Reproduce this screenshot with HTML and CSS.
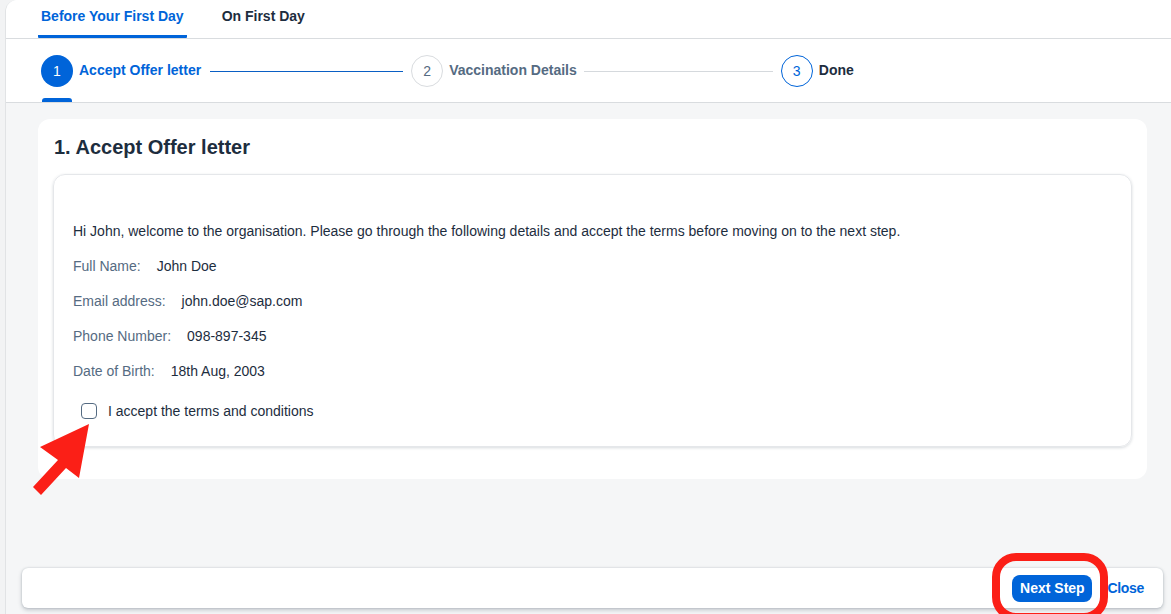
FILE: index.html
```html
<!DOCTYPE html>
<html lang="en">
<head>
<meta charset="utf-8">
<title>Onboarding</title>
<link rel="stylesheet" href="styles.css">
</head>
<body>
<div class="app">
  <header class="tabs">
    <div class="tab tab-active">Before Your First Day</div>
    <div class="tab">On First Day</div>
  </header>
  <nav class="stepper">
    <div class="step step-current">
      <span class="circle circle-filled">1</span>
      <span class="step-label label-active">Accept Offer letter</span>
      <span class="indicator"></span>
    </div>
    <span class="connector connector-done"></span>
    <div class="step">
      <span class="circle circle-gray">2</span>
      <span class="step-label label-gray">Vaccination Details</span>
    </div>
    <span class="connector"></span>
    <div class="step">
      <span class="circle circle-outline">3</span>
      <span class="step-label label-dark">Done</span>
    </div>
  </nav>
  <main class="content">
    <section class="card">
      <h1 class="card-title">1. Accept Offer letter</h1>
      <div class="panel">
        <p class="intro">Hi John, welcome to the organisation. Please go through the following details and accept the terms before moving on to the next step.</p>
        <div class="field"><span class="field-label">Full Name:</span><span class="field-value">John Doe</span></div>
        <div class="field"><span class="field-label">Email address:</span><span class="field-value">john.doe@sap.com</span></div>
        <div class="field"><span class="field-label">Phone Number:</span><span class="field-value">098-897-345</span></div>
        <div class="field"><span class="field-label">Date of Birth:</span><span class="field-value">18th Aug, 2003</span></div>
        <label class="check"><span class="box"></span><span>I accept the terms and conditions</span></label>
      </div>
    </section>
    <footer class="footer">
      <button class="btn-primary">Next Step</button>
      <button class="btn-link">Close</button>
    </footer>
  </main>
</div>
<svg class="arrow" width="1171" height="614" viewBox="0 0 1171 614">
  <polygon points="89,424 79,478 66,468 41,495 33,487 58,460 40,447" fill="#fb1f17"/>
</svg>
<div class="highlight"></div>
</body>
</html>
```
FILE: styles.css
```css
* { box-sizing: border-box; }
html, body { margin: 0; height: 100%; }
body {
  background: #f2f3f4;
  font-family: "Liberation Sans", Arial, sans-serif;
  color: #1d2d3e;
  overflow: hidden;
}
.app {
  margin-left: 5px;
  height: 614px;
  display: flex;
  flex-direction: column;
  background: #f5f6f7;
  border-left: 1px solid #e1e3e5;
  border-top-left-radius: 12px;
  overflow: hidden;
}
.tabs {
  height: 39px;
  background: #fff;
  border-bottom: 1px solid #d9dcdf;
  display: flex;
  gap: 32px;
  padding-left: 32px;
}
.tab {
  height: 38px;
  padding: 0 3px 6px;
  display: flex;
  align-items: center;
  font-size: 14px;
  font-weight: bold;
  color: #1d2d3e;
}
.tab-active {
  color: #0064d9;
  border-bottom: 3px solid #0064d9;
  border-radius: 0 0 1px 1px;
  padding-bottom: 3px;
}
.stepper {
  height: 64px;
  background: #fff;
  border-bottom: 1px solid #d9dcdf;
  display: flex;
  align-items: center;
  padding: 0 0 1px 35px;
}
.step {
  position: relative;
  display: flex;
  align-items: center;
  height: 100%;
}
.circle {
  width: 32px;
  height: 32px;
  border-radius: 50%;
  display: flex;
  align-items: center;
  justify-content: center;
  font-size: 14px;
  margin-top: 2px;
}
.circle-filled { background: #0064d9; color: #fff; }
.circle-gray { border: 1px solid #d9dcdf; color: #556b82; }
.circle-outline { border: 1px solid #0064d9; color: #0064d9; }
.step-label {
  margin-left: 6px;
  font-size: 14px;
  font-weight: bold;
  margin-bottom: 1px;
}
.label-active { color: #0064d9; }
.label-gray { color: #556b82; }
.label-dark { color: #1d2d3e; }
.indicator {
  position: absolute;
  left: 1px;
  bottom: -1px;
  width: 30px;
  height: 4px;
  background: #0064d9;
  border-radius: 3px 3px 0 0;
}
.connector {
  height: 1px;
  background: #d5d9dd;
  width: 189px;
  margin: 2px 8px 0 7px;
}
.connector-done { background: #0a5fc4; width: 193px; margin-left: 9px; }
.content {
  flex: 1;
  display: flex;
  flex-direction: column;
  padding: 16px 0 6px 0;
}
.card {
  margin: 0 24px 0 32px;
  background: #fff;
  border-radius: 12px;
  padding: 15px 15px 32px 15px;
}
.card-title {
  margin: 0 0 14px 1px;
  font-size: 20px;
  font-weight: bold;
  color: #1d2d3e;
  line-height: 26px;
}
.panel {
  border: 1px solid #e5e7ea;
  border-radius: 12px;
  box-shadow: 0 1px 3px rgba(34, 53, 72, 0.18);
  padding: 47px 19px 27px 19px;
}
.intro {
  margin: 0 0 17px;
  font-size: 14px;
  line-height: 18px;
  color: #1d2d3e;
}
.field {
  font-size: 14px;
  line-height: 18px;
  margin-bottom: 17px;
  display: flex;
  gap: 16px;
}
.field-label { color: #556b82; }
.field-value { color: #1d2d3e; }
.check {
  display: flex;
  align-items: center;
  gap: 11px;
  font-size: 14px;
  color: #1d2d3e;
  margin-top: 23px;
  padding-left: 8px;
}
.box {
  width: 16px;
  height: 16px;
  border: 1px solid #556b82;
  border-radius: 4px;
  background: #fff;
}
.footer {
  margin: auto 8px 0 16px;
  height: 40px;
  background: #fff;
  border-radius: 6px;
  box-shadow: 0 0 2px rgba(34, 53, 72, 0.2), 0 2px 4px rgba(34, 53, 72, 0.25);
  display: flex;
  align-items: center;
  justify-content: flex-end;
  padding-right: 19px;
  gap: 15px;
}
.btn-primary {
  font-family: inherit;
  font-size: 14px;
  font-weight: bold;
  background: #0064d9;
  color: #fff;
  border: none;
  border-radius: 8px;
  height: 27px;
  width: 80px;
  padding: 0;
}
.btn-link {
  font-family: inherit;
  font-size: 14px;
  font-weight: bold;
  background: none;
  color: #0064d9;
  border: none;
  padding: 0;
  letter-spacing: -0.3px;
}
.arrow {
  position: absolute;
  left: 0;
  top: 0;
  pointer-events: none;
}
.highlight {
  position: absolute;
  left: 992px;
  top: 553px;
  width: 116px;
  height: 68px;
  border: 8px solid #fb1f17;
  border-radius: 24px;
  pointer-events: none;
}
```
